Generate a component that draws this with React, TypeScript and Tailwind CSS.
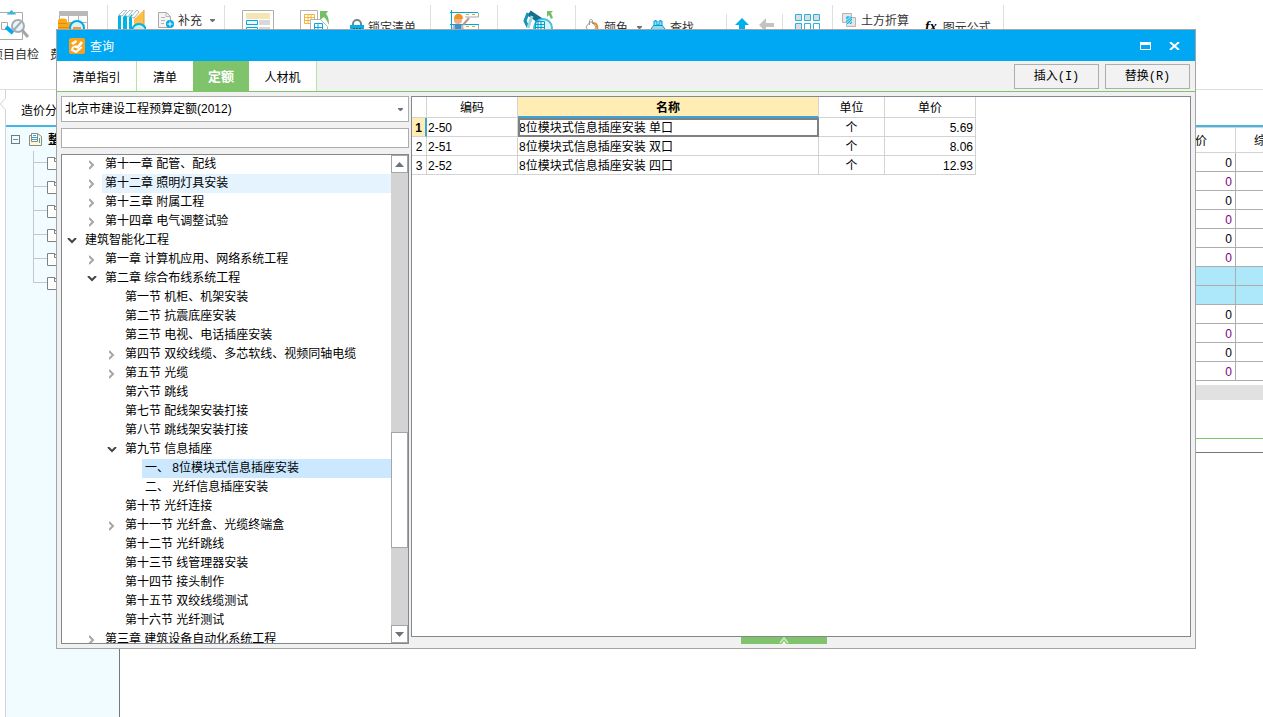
import type { ReactNode } from "react";
import clsx from "clsx";

type TreeItem = {
  level: 0 | 1 | 2 | 3;
  label: string;
  state?: "open" | "closed";
  hovered?: boolean;
  selected?: boolean;
};

const chapters: TreeItem[] = [
  { level: 1, label: "第十一章 配管、配线", state: "closed" },
  { level: 1, label: "第十二章 照明灯具安装", state: "closed", hovered: true },
  { level: 1, label: "第十三章 附属工程", state: "closed" },
  { level: 1, label: "第十四章 电气调整试验", state: "closed" },
  { level: 0, label: "建筑智能化工程", state: "open" },
  { level: 1, label: "第一章 计算机应用、网络系统工程", state: "closed" },
  { level: 1, label: "第二章 综合布线系统工程", state: "open" },
  { level: 2, label: "第一节 机柜、机架安装" },
  { level: 2, label: "第二节 抗震底座安装" },
  { level: 2, label: "第三节 电视、电话插座安装" },
  { level: 2, label: "第四节 双绞线缆、多芯软线、视频同轴电缆", state: "closed" },
  { level: 2, label: "第五节 光缆", state: "closed" },
  { level: 2, label: "第六节 跳线" },
  { level: 2, label: "第七节 配线架安装打接" },
  { level: 2, label: "第八节 跳线架安装打接" },
  { level: 2, label: "第九节 信息插座", state: "open" },
  { level: 3, label: "一、 8位模块式信息插座安装", selected: true },
  { level: 3, label: "二、 光纤信息插座安装" },
  { level: 2, label: "第十节 光纤连接" },
  { level: 2, label: "第十一节 光纤盒、光缆终端盒", state: "closed" },
  { level: 2, label: "第十二节 光纤跳线" },
  { level: 2, label: "第十三节 线管理器安装" },
  { level: 2, label: "第十四节 接头制作" },
  { level: 2, label: "第十五节 双绞线缆测试" },
  { level: 2, label: "第十六节 光纤测试" },
  { level: 1, label: "第三章 建筑设备自动化系统工程", state: "closed" },
];

const indent = ["pl-0", "pl-5", "pl-10", "pl-15"];

const quotas = [
  { code: "2-50", name: "8位模块式信息插座安装 单口", unit: "个", price: "5.69" },
  { code: "2-51", name: "8位模块式信息插座安装 双口", unit: "个", price: "8.06" },
  { code: "2-52", name: "8位模块式信息插座安装 四口", unit: "个", price: "12.93" },
];

const priceRows = ["0", "0", "0", "0", "0", "0", "", "", "0", "0", "0", "0"];

/* ---------- icons ---------- */

function CheckIcon() {
  return (
    <svg width="30" height="32" viewBox="0 0 30 32" fill="none">
      <path d="M0 2.500H22.500V29.500H0" stroke="#a9a9a9" />
      <path d="M7 4.500c0-2 2-1 3-2 0-3 3-3 3 0 1 1 3 0 3 2z" fill="#29b6e8" />
      <path d="M1.500 12.500h6v7h-6z" stroke="#a9a9a9" />
      <path d="M6 17l7 6" stroke="#00a8ec" strokeWidth="4" />
      <circle cx="18" cy="16" r="6" fill="#e8f6fb" stroke="#a6abb0" strokeWidth="2" />
      <path d="M13 21l8-9" stroke="#a6abb0" strokeWidth="2" />
      <path d="M22 20l6 7" stroke="#a6a6a6" strokeWidth="3" />
    </svg>
  );
}

function CostIcon() {
  return (
    <svg width="32" height="32" viewBox="0 0 32 32" fill="none">
      <path d="M1.500 1.500h28v28h-28z" fill="#fff" stroke="#adadad" />
      <path d="M1 1h29v5H1z" fill="#b9b9b9" />
      <path d="M1 12.500h29M10.500 6v20M20.500 6v20" stroke="#b9b9b9" />
      <path d="M0 10c2-2 8-2 9 0v3c3-2 9-1 9 1v16H0z" fill="#fba91c" />
      <path d="M0 13.500h9M0 17.500h16M0 21.500h16" stroke="#e58b00" />
      <circle cx="19" cy="18" r="7" fill="#d8f1fa" stroke="#00a8e8" strokeWidth="2" />
      <path d="M15 18h8" stroke="#f1a11d" strokeWidth="2" />
    </svg>
  );
}

function BooksIcon() {
  return (
    <svg width="28" height="32" viewBox="0 0 28 32" fill="none">
      <path d="M0 6l3-3v27H0zM5 7l4-4v27H5zM11 7l3-3v26h-3z" fill="#00b4e6" />
      <path d="M1 5l5-5h3L4 6zM7 5l5-5h3l-5 7zM13 7l6-7 2 2-5 6z" fill="#fff" stroke="#9fb9bd" />
      <path d="M16 9l10-9v30H16z" fill="#ffc04a" />
      <path d="M26 0v30" stroke="#e0a030" />
      <circle cx="21" cy="21" r="7" fill="#c9ecf7" stroke="#00b4e6" strokeWidth="2" />
    </svg>
  );
}

function AddFileIcon() {
  return (
    <svg width="16" height="16" viewBox="0 0 16 16" fill="none">
      <path d="M.5.5h8l4 4v11H.5z" fill="#f4f4f4" stroke="#a9a9a9" />
      <path d="M8 .5v4h4M3 5.500h4M3 8.500h4M3 11.500h3" stroke="#b5b5b5" />
      <circle cx="12" cy="12" r="4" fill="#00a8e0" />
      <path d="M12 9.500v5M9.500 12h5" stroke="#fff" />
    </svg>
  );
}

function FormIcon() {
  return (
    <svg width="32" height="32" viewBox="0 0 32 32" fill="none">
      <path d="M.5.5h31v31H.5z" fill="#fff" stroke="#adadad" />
      <path d="M4 3h24v6H4z" fill="#f3e5b4" />
      <path d="M4.500 10.500h11v4h-11zM4.500 17.500h11v4h-11z" fill="#eaf8fd" stroke="#00a8e8" />
      <path d="M17 10h11v5H17zM17 17h11v5H17z" fill="#d8d8da" />
    </svg>
  );
}

function ConvertIcon() {
  return (
    <svg width="30" height="32" viewBox="0 0 30 32" fill="none">
      <path d="M.5.5h17v29H.5z" fill="#fff" stroke="#b3b3b3" />
      <path d="M4.500 4.500h10v9h-10zM8 4v10M11 4v10M4 7.500h11M4 10.500h11" stroke="#f5b53c" />
      <path d="M10.500 9.500h10l7 7v14h-17z" fill="#fff" stroke="#b3b3b3" />
      <path d="M14.500 13.500h8v9h-8zM18 13v10M14 17.500h9" stroke="#00a8e8" />
      <path d="M20 1h8l-2 3c2 2 3 5 3 11-2-4-3-6-5-8l-4 3z" fill="#76c063" />
    </svg>
  );
}

function LockIcon() {
  return (
    <svg width="14" height="16" viewBox="0 0 14 16" fill="none">
      <path d="M3 7V5a4 4 0 0 1 8 0v2" stroke="#75838f" strokeWidth="2" />
      <path d="M0 6h14v9H0z" fill="#00b0ee" />
      <path d="M3 9.500h2M6 9.500h2M9 9.500h2" stroke="#006f9d" />
    </svg>
  );
}

function WorkerIcon() {
  return (
    <svg width="30" height="32" viewBox="0 0 30 32" fill="none">
      <path d="M1.500 0v30M0 2.500h28M0 14.500h29" stroke="#00a8d8" />
      <path d="M28.500 3v4H15M28.500 15v4" stroke="#a9a9a9" />
      <path d="M16 4.500h3M22 4.500h3M16 16.500h3M22 16.500h3" stroke="#f0a020" />
      <path d="M13 15l6-7" stroke="#b59a8a" strokeWidth="2" />
      <circle cx="8" cy="10" r="4" fill="#eab088" />
      <path d="M4 9a4 5 0 0 1 9 0z" fill="#f29222" />
      <path d="M3 15h10l2 12H1z" fill="#b5b5bd" />
      <path d="M5 14h6v10H5z" fill="#3d8fd0" />
    </svg>
  );
}

function ToolIcon() {
  return (
    <svg width="30" height="32" viewBox="0 0 30 32" fill="none">
      <path d="M6 3l12 8" stroke="#126f8e" strokeWidth="6" />
      <path d="M5 3L2 11l3 6" stroke="#1595b6" strokeWidth="3" />
      <path d="M9 6L5 18" stroke="#9ed6e4" strokeWidth="3" />
      <circle cx="20" cy="18" r="9" fill="#d9f3fb" stroke="#40bfde" strokeWidth="2" />
      <path d="M12.500 11.500h9v10h-9zM15 11v10M18 11v10M12 14.500h10M12 17.500h10" stroke="#00a0d0" />
      <path d="M24 1h6l-2 2 2 5-2 1-2-4-2 2z" fill="#76c063" />
    </svg>
  );
}

function PaintIcon() {
  return (
    <svg width="14" height="16" viewBox="0 0 14 16" fill="none">
      <path d="M1 8l4-5h2l4 5-3 6H5z" fill="#fff" stroke="#9a9a9a" />
      <path d="M4.500 6V2c0-2 3-2 3 0v3" stroke="#9a9a9a" />
      <path d="M8 4c4 0 5 3 4 10" stroke="#e88a2a" strokeWidth="2" />
    </svg>
  );
}

function BinocularsIcon() {
  return (
    <svg width="16" height="16" viewBox="0 0 16 16" fill="none">
      <path d="M4 2h3v4h2V2h3v4l3 4v4H9v-3H7v3H1v-4l3-4z" fill="#8bdcf4" stroke="#009fd2" />
      <path d="M1 10.500h14M4 6.500h8M5 1.500h1M10 1.500h1" stroke="#009fd2" />
    </svg>
  );
}

function UpIcon() {
  return (
    <svg width="14" height="16" viewBox="0 0 14 16">
      <path d="M7 0l7 7h-4v8H4V7H0z" fill="#00b0ee" />
    </svg>
  );
}

function BackIcon() {
  return (
    <svg width="15" height="14" viewBox="0 0 15 14">
      <path d="M0 7l7-7v5h8v4H7v5z" fill="#c3c3c3" />
    </svg>
  );
}

function GridIcon() {
  return (
    <svg width="26" height="26" viewBox="0 0 26 26" fill="#dcdfe2" stroke="#2cb2de">
      <path d="M.5.5h6v6h-6zM9.500.5h6v6h-6zM18.500.5h6v6h-6zM.5 9.500h6v6h-6z" />
      <path d="M9.500 9.500h6v6h-6zM18.500 9.500h6v6h-6zM.5 18.500h6v6h-6zM9.500 18.500h6v6h-6z" fill="#fff" />
    </svg>
  );
}

function EarthworkIcon() {
  return (
    <svg width="14" height="14" viewBox="0 0 14 14" fill="none">
      <path d="M.5.5h9v9h-9zM4.500 4.500h9v9h-9z" fill="#e6e6e6" stroke="#b5b5b5" />
      <path d="M4 3h6v8H4z" fill="#8cdcf2" />
      <path d="M4 5h2V3M4 9l6-5M5 11l5-5M8 11l2-2" stroke="#13a6cf" />
    </svg>
  );
}

function LogoIcon() {
  return (
    <svg width="16" height="16" viewBox="0 0 16 16" fill="none">
      <rect width="16" height="16" rx="2" fill="#f9a11b" />
      <path d="M2 5l5-3 1 2-4 3zM3 9l4-2 1 1 4-5 2 2-5 6-2-1z" fill="#fff" />
      <path d="M4 9l-1 3 4 2 6-5" stroke="#fff" strokeWidth="2" />
    </svg>
  );
}

function PageIcon() {
  return (
    <svg width="13" height="13" viewBox="0 0 13 13" fill="none">
      <path d="M.5 12.500v-10h2v-2h6l4 3v9z" fill="#fff7d2" stroke="#8a8a8a" />
      <path d="M2.500.5h6v8h-6z" fill="#fff" stroke="#8a8a8a" />
      <path d="M4 2.500h3M3 4.500h5M3 6.500h5M10.500 5v5" stroke="#2fa8d8" />
    </svg>
  );
}

function FileIcon() {
  return (
    <svg width="12" height="13" viewBox="0 0 12 13" fill="#fff" stroke="#808080">
      <path d="M.5.5h7l4 4v8H.5zM7.500.5v4h4" />
    </svg>
  );
}

function Chevron({ open }: { open: boolean }) {
  return open ? (
    <svg width="10" height="6" viewBox="0 0 10 6" fill="none">
      <path d="M1 0l4 4 4-4" stroke="#444" strokeWidth="2" />
    </svg>
  ) : (
    <svg width="6" height="10" viewBox="0 0 6 10" fill="none">
      <path d="M0 1l4 4-4 4" stroke="#a6a6a6" strokeWidth="2" />
    </svg>
  );
}

function Caret() {
  return (
    <svg width="5" height="3" viewBox="0 0 5 3">
      <path d="M0 0h5v1L3 3H2L0 1z" fill="#6f7080" />
    </svg>
  );
}

/* ---------- main window ---------- */

function ToolGroup({ className, children }: { className: string; children?: ReactNode }) {
  return (
    <div className={clsx("flex shrink-0 items-start border-r border-[#dedede] pt-[5px]", className)}>
      {children}
    </div>
  );
}

function Toolbar() {
  return (
    <div className="flex h-[90px] shrink-0 border-b border-[#dedede] pt-[5px] pb-1 text-[#333]">
      <ToolGroup className="w-[108px] gap-[11px]">
        <button className="-ml-[9px] flex w-12 shrink-0 flex-col items-center gap-[5px]">
          <CheckIcon />
          <span>项目自检</span>
        </button>
        <button className="flex w-12 shrink-0 flex-col items-center gap-[5px]">
          <CostIcon />
          <span>费用查看</span>
        </button>
      </ToolGroup>
      <ToolGroup className="w-[117px] gap-3 pl-[10px]">
        <button aria-label="查询">
          <BooksIcon />
        </button>
        <button className="flex items-center gap-1 pt-px">
          <AddFileIcon />
          <span className="pt-[2px]">补充</span>
          <span className="pl-1">
            <Caret />
          </span>
        </button>
      </ToolGroup>
      <ToolGroup className="w-[206px] pl-[17px]">
        <button aria-label="标准组价">
          <FormIcon />
        </button>
        <button aria-label="复用组价" className="ml-[26px]">
          <ConvertIcon />
        </button>
        <button className="ml-5 flex items-center gap-1 pt-2">
          <LockIcon />
          <span className="pt-[2px]">锁定清单</span>
        </button>
      </ToolGroup>
      <ToolGroup className="w-[67px] pl-[19px]">
        <button aria-label="整理清单">
          <WorkerIcon />
        </button>
      </ToolGroup>
      <ToolGroup className="w-[78px] pl-[25px]">
        <button aria-label="单价构成">
          <ToolIcon />
        </button>
      </ToolGroup>
      <div className="flex w-[257px] shrink-0 border-r border-[#dedede] pt-[9px]">
        <div className="flex w-[151px] items-start gap-2 border-r border-[#dedede] pt-1 pl-[9px]">
          <button className="flex items-center gap-[5px]">
            <PaintIcon />
            <span className="pt-[2px]">颜色</span>
            <span className="pl-1">
              <Caret />
            </span>
          </button>
          <button className="flex items-center gap-1">
            <BinocularsIcon />
            <span className="pt-[2px]">查找</span>
          </button>
        </div>
        <div className="flex w-14 items-start gap-[10px] border-r border-[#dedede] pt-1 pl-2">
          <button aria-label="上移">
            <UpIcon />
          </button>
          <button aria-label="返回">
            <BackIcon />
          </button>
        </div>
        <button aria-label="其他" className="self-start pl-3">
          <GridIcon />
        </button>
      </div>
      <ToolGroup className="w-[171px] gap-4 pl-[9px]">
        <button className="flex items-center gap-[5px] pt-px">
          <EarthworkIcon />
          <span className="pt-[2px]">土方折算</span>
        </button>
        <button className="flex items-center gap-[6px] pt-2">
          <i className="font-['Liberation_Serif',serif] text-sm leading-4 font-bold text-black">fx</i>
          <span className="pt-[2px]">图元公式</span>
        </button>
      </ToolGroup>
    </div>
  );
}

function ProjectTree() {
  return (
    <aside className="w-[114px] shrink-0 overflow-hidden border-r border-[#777] bg-[#f0fcff]">
      <div className="flex h-6 items-center pl-[5px] text-black">
        <span className="flex size-[9px] shrink-0 items-center border border-[#777] px-px">
          <span className="h-px w-full bg-[#29a3dc]" />
        </span>
        <span className="ml-[9px] shrink-0">
          <PageIcon />
        </span>
        <span className="ml-[6px] pt-[2px] font-bold whitespace-nowrap">整个项目</span>
      </div>
      <ul>
        {[0, 1, 2, 3, 4, 5].map((n) => (
          <li key={n} className="flex h-6 items-center pl-[27px]">
            <div className="w-[14px]">
              <div className="h-3 border-b border-l border-[#c0c8ca]" />
              <div className={clsx("h-3", n < 5 && "border-l border-[#c0c8ca]")} />
            </div>
            <FileIcon />
          </li>
        ))}
      </ul>
    </aside>
  );
}

function PriceTable() {
  return (
    <table className="w-full table-fixed border-separate border-spacing-0">
      <thead>
        <tr className="h-[26px]">
          <th className="border-y border-[#d3d3d3]" />
          <th className="w-[81px] border-y border-r border-[#d3d3d3] pt-[2px] font-normal">单价</th>
          <th className="w-[27px] overflow-hidden border-y border-[#d3d3d3] pt-[2px] pl-[18px] text-left font-normal whitespace-nowrap">
            综合单价
          </th>
        </tr>
      </thead>
      <tbody>
        {priceRows.map((value, i) => (
          <tr key={i} className={clsx("h-[19px]", value === "" && "bg-[#ade8fa]")}>
            <td className="border-b border-[#adadad]" />
            <td
              className={clsx(
                "border-r border-b border-[#adadad] pt-[2px] pr-[3px] text-right leading-4",
                i % 2 === 1 && "text-[#800080]",
              )}
            >
              {value}
            </td>
            <td className="border-b border-[#adadad]" />
          </tr>
        ))}
      </tbody>
    </table>
  );
}

function MainWindow() {
  return (
    <div className="flex h-full flex-col">
      <Toolbar />
      <div className="flex min-h-0 flex-1">
        <div className="flex w-[6px] shrink-0 flex-col">
          <svg width="6" height="22" viewBox="0 0 6 22" fill="none">
            <path d="M5.500 0v8L.5 14l5 6v2" stroke="#d3d3d3" />
          </svg>
          <div className="flex-1 border-r border-[#d3d3d3]" />
        </div>
        <div className="flex min-w-0 flex-1 flex-col">
          <div className="flex h-[37px] shrink-0 items-center border-b-2 border-[#45b5e6] pt-[6px] pl-[15px]">
            <a href="#analysis">造价分析</a>
          </div>
          <div className="flex min-h-0 flex-1">
            <ProjectTree />
            <main className="min-w-0 flex-1">
              <PriceTable />
              <div className="mt-1 h-[15px] bg-[#e1e1e1]" />
              <div className="mt-[38px] border-t border-[#7fc36a]" />
              <div className="mt-[13px] border-t border-[#777]" />
            </main>
          </div>
        </div>
      </div>
    </div>
  );
}

/* ---------- query dialog ---------- */

function TitleBar() {
  return (
    <header className="flex h-[31px] shrink-0 items-center bg-[#00a8f3] pr-[15px] pl-3 text-white">
      <LogoIcon />
      <h1 className="flex-1 pt-[2px] pl-[5px]">查询</h1>
      <button aria-label="最大化" className="mr-[18px]">
        <svg width="11" height="8" viewBox="0 0 11 8">
          <path d="M0 0h11v8H0zM1 3v4h9V3z" fill="#fff" fillRule="evenodd" />
        </svg>
      </button>
      <button aria-label="关闭">
        <svg width="11" height="8" viewBox="0 0 11 8" fill="none">
          <path d="M1 0l9 8M10 0L1 8" stroke="#fff" strokeWidth="2" />
        </svg>
      </button>
    </header>
  );
}

function TabBar() {
  const button =
    "h-[25px] w-[85px] border border-[#adadad] bg-[#f2f2f2] pt-[2px] font-['Liberation_Mono','Noto_Sans_CJK_SC',monospace]";
  return (
    <div className="flex h-[31px] shrink-0 items-stretch border-b border-[#7fc36a] pr-[5px]">
      <div role="tablist" className="flex flex-1">
        <button role="tab" className="w-20 border-r border-[#b5e3a2] bg-white pt-1">清单指引</button>
        <button role="tab" className="w-14 bg-white pt-1">清单</button>
        <button
          role="tab"
          aria-selected="true"
          className="w-14 bg-[#7fc36a] pt-[2px] text-[13px] font-bold text-white"
        >
          定额
        </button>
        <button role="tab" className="w-17 border-r border-[#b5e3a2] bg-white pt-1">人材机</button>
      </div>
      <div className="flex items-center gap-[6px]">
        <button className={button}>插入(I)</button>
        <button className={button}>替换(R)</button>
      </div>
    </div>
  );
}

function TreeRow({ item }: { item: TreeItem }) {
  return (
    <li className={clsx("flex h-[19px] leading-[18px]", indent[item.level])}>
      <span className="flex w-5 shrink-0 items-center justify-center">
        {item.state && <Chevron open={item.state === "open"} />}
      </span>
      <span
        className={clsx(
          "flex-1 pl-[3px] whitespace-nowrap",
          item.hovered && "bg-[#e5f3ff]",
          item.selected && "bg-[#cce8ff]",
        )}
      >
        {item.label}
      </span>
    </li>
  );
}

function ScrollBar() {
  const arrow = "flex h-[18px] w-full shrink-0 items-center justify-center border border-[#a5a5a5] bg-white";
  return (
    <div className="flex w-[17px] shrink-0 flex-col bg-[#d3d3d3]">
      <button aria-label="向上滚动" className={arrow}>
        <svg width="9" height="5" viewBox="0 0 9 5">
          <path d="M4.500 0L9 5H0z" fill="#6f7080" />
        </svg>
      </button>
      <div className="flex flex-1 flex-col">
        <div className="flex-[260]" />
        <div className="flex-[115] border border-[#a5a5a5] bg-white" />
        <div className="flex-[77]" />
      </div>
      <button aria-label="向下滚动" className={arrow}>
        <svg width="9" height="5" viewBox="0 0 9 5">
          <path d="M0 0h9L4.500 5z" fill="#6f7080" />
        </svg>
      </button>
    </div>
  );
}

function ChapterPanel() {
  return (
    <section className="flex w-[348px] shrink-0 flex-col gap-[6px]">
      <div className="relative">
        <select
          aria-label="定额库"
          className="block h-[26px] w-full appearance-none border border-[#adadad] bg-white pl-[3px]"
        >
          <option>北京市建设工程预算定额(2012)</option>
        </select>
        <span className="pointer-events-none absolute inset-y-0 right-[6px] flex items-center">
          <Caret />
        </span>
      </div>
      <input aria-label="搜索" className="h-5 w-full shrink-0 border border-[#adadad] bg-white px-1" />
      <div className="flex min-h-0 flex-1 border border-[#828790] bg-white">
        <ul className="min-w-0 flex-1 overflow-hidden">
          {chapters.map((item) => (
            <TreeRow key={item.label} item={item} />
          ))}
        </ul>
        <ScrollBar />
      </div>
    </section>
  );
}

function QuotaTable() {
  const cell = "border-r border-b border-[#d3d3d3] pt-[2px] leading-4";
  return (
    <table className="w-[564px] table-fixed border-separate border-spacing-0">
      <thead>
        <tr className="h-[21px]">
          <th className={clsx(cell, "w-[15px]")} />
          <th className={clsx(cell, "w-[91px] font-normal")}>编码</th>
          <th className="w-[301px] border-r border-b-2 border-r-[#d3d3d3] border-b-[#3aa5d8] bg-[#ffedb3] pt-[2px] leading-4 font-bold">
            名称
          </th>
          <th className={clsx(cell, "w-[66px] font-normal")}>单位</th>
          <th className={clsx(cell, "w-[91px] font-normal")}>单价</th>
        </tr>
      </thead>
      <tbody>
        {quotas.map((row, i) => (
          <tr key={row.code} className="h-[19px]">
            {i === 0 ? (
              <th className="border-r-2 border-b border-r-[#3aa5d8] border-b-[#d3d3d3] bg-[#ffedb3] pt-[2px] leading-4 font-bold">
                1
              </th>
            ) : (
              <th className={clsx(cell, "font-normal")}>{i + 1}</th>
            )}
            <td className={clsx(cell, "pl-px")}>{row.code}</td>
            <td className={clsx(cell, "pl-px", i === 0 && "outline-2 -outline-offset-2 outline-[#808080]")}>
              {row.name}
            </td>
            <td className={clsx(cell, "text-center")}>{row.unit}</td>
            <td className={clsx(cell, "pr-[2px] text-right")}>{row.price}</td>
          </tr>
        ))}
      </tbody>
    </table>
  );
}

function QueryDialog() {
  return (
    <div
      role="dialog"
      aria-label="查询"
      className="absolute top-[29px] right-[67px] bottom-[68px] left-14 flex flex-col border border-[#a5a5a5] bg-[#f1f1f1]"
    >
      <TitleBar />
      <TabBar />
      <div className="flex min-h-0 flex-1 gap-[2px] p-1">
        <ChapterPanel />
        <section className="flex min-w-0 flex-1 flex-col">
          <div className="min-h-0 flex-1 border border-[#828790] bg-white">
            <QuotaTable />
          </div>
          <button
            aria-label="展开"
            className="mr-[34px] flex h-[7px] w-[86px] items-end justify-center self-center bg-[#7fc36a]"
          >
            <svg width="10" height="7" viewBox="0 0 10 7" fill="none">
              <path d="M1 6l4-5 4 5" stroke="#c4e6b8" strokeWidth="2" />
              <path d="M3 7l2-3 2 3z" fill="#fff" />
            </svg>
          </button>
        </section>
      </div>
    </div>
  );
}

export default function App() {
  return (
    <div className="relative h-screen overflow-hidden bg-white font-['Liberation_Sans','Noto_Sans_CJK_SC',sans-serif] text-xs text-black">
      <MainWindow />
      <QueryDialog />
    </div>
  );
}
